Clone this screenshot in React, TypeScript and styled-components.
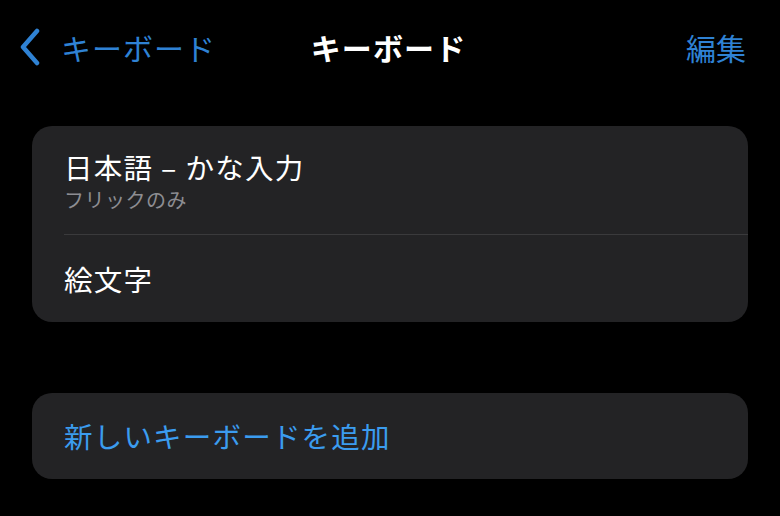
import React from 'react';
import styled, { createGlobalStyle } from 'styled-components';

const GlobalStyle = createGlobalStyle`
  html, body {
    margin: 0;
    padding: 0;
    background: #000;
  }
  body {
    font-family: "Noto Sans CJK JP", "Noto Sans", sans-serif;
    -webkit-font-smoothing: antialiased;
  }
`;

const Screen = styled.div`
  width: 780px;
  height: 516px;
  background: #000;
  overflow: hidden;
`;

const NavBar = styled.div`
  height: 94px;
  display: grid;
  grid-template-columns: 1fr auto 1fr;
  align-items: center;
  padding: 0 34px 0 19px;
`;

const BackButton = styled.div`
  display: flex;
  align-items: center;
  gap: 20px;
  color: #2f82d4;
  font-size: 30px;
  line-height: 36px;
  letter-spacing: 1px;
`;

const NavTitle = styled.div`
  color: #fff;
  font-size: 30px;
  line-height: 36px;
  font-weight: 700;
  letter-spacing: 1.1px;
  padding-left: 12px;
`;

const NavAction = styled.div`
  justify-self: end;
  color: #2f82d4;
  font-size: 30px;
  line-height: 36px;
`;

const Card = styled.div<{ $mt: number }>`
  margin: ${p => p.$mt}px 32px 0 32px;
  background: #232325;
  border-radius: 20px;
  overflow: hidden;
`;

const Row = styled.div<{ $height: number }>`
  height: ${p => p.$height}px;
  padding: 0 32px;
  display: flex;
  flex-direction: column;
  justify-content: center;
  box-sizing: border-box;
`;

const RowTitle = styled.div<{ $accent?: boolean }>`
  color: ${p => (p.$accent ? '#3b9cef' : '#fff')};
  font-size: 28.5px;
  line-height: 38px;
  letter-spacing: 1.2px;
`;

const Dash = styled.span`
  margin: 0 8px;
`;

const RowSub = styled.div`
  color: #8d8d92;
  font-size: 20px;
  line-height: 24px;
  margin-top: 2px;
  letter-spacing: 0.5px;
`;

const Separator = styled.div`
  height: 1px;
  margin-left: 32px;
  background: #3a3a3c;
`;

const Chevron = () => (
  <svg width="22" height="38" viewBox="0 0 22 38" fill="none">
    <path
      d="M18 3 L4 19 L18 35"
      stroke="#2f82d4"
      strokeWidth="4.5"
      strokeLinecap="round"
      strokeLinejoin="round"
    />
  </svg>
);

const App: React.FC = () => {
  return (
    <Screen>
      <GlobalStyle />
      <NavBar>
        <BackButton>
          <Chevron />
          <span>キーボード</span>
        </BackButton>
        <NavTitle>キーボード</NavTitle>
        <NavAction>編集</NavAction>
      </NavBar>

      <Card $mt={32}>
        <Row $height={108}>
          <RowTitle>
            日本語<Dash>–</Dash>かな入力
          </RowTitle>
          <RowSub>フリックのみ</RowSub>
        </Row>
        <Separator />
        <Row $height={87}>
          <RowTitle>絵文字</RowTitle>
        </Row>
      </Card>

      <Card $mt={71}>
        <Row $height={86}>
          <RowTitle $accent>新しいキーボードを追加</RowTitle>
        </Row>
      </Card>
    </Screen>
  );
};

export default App;
